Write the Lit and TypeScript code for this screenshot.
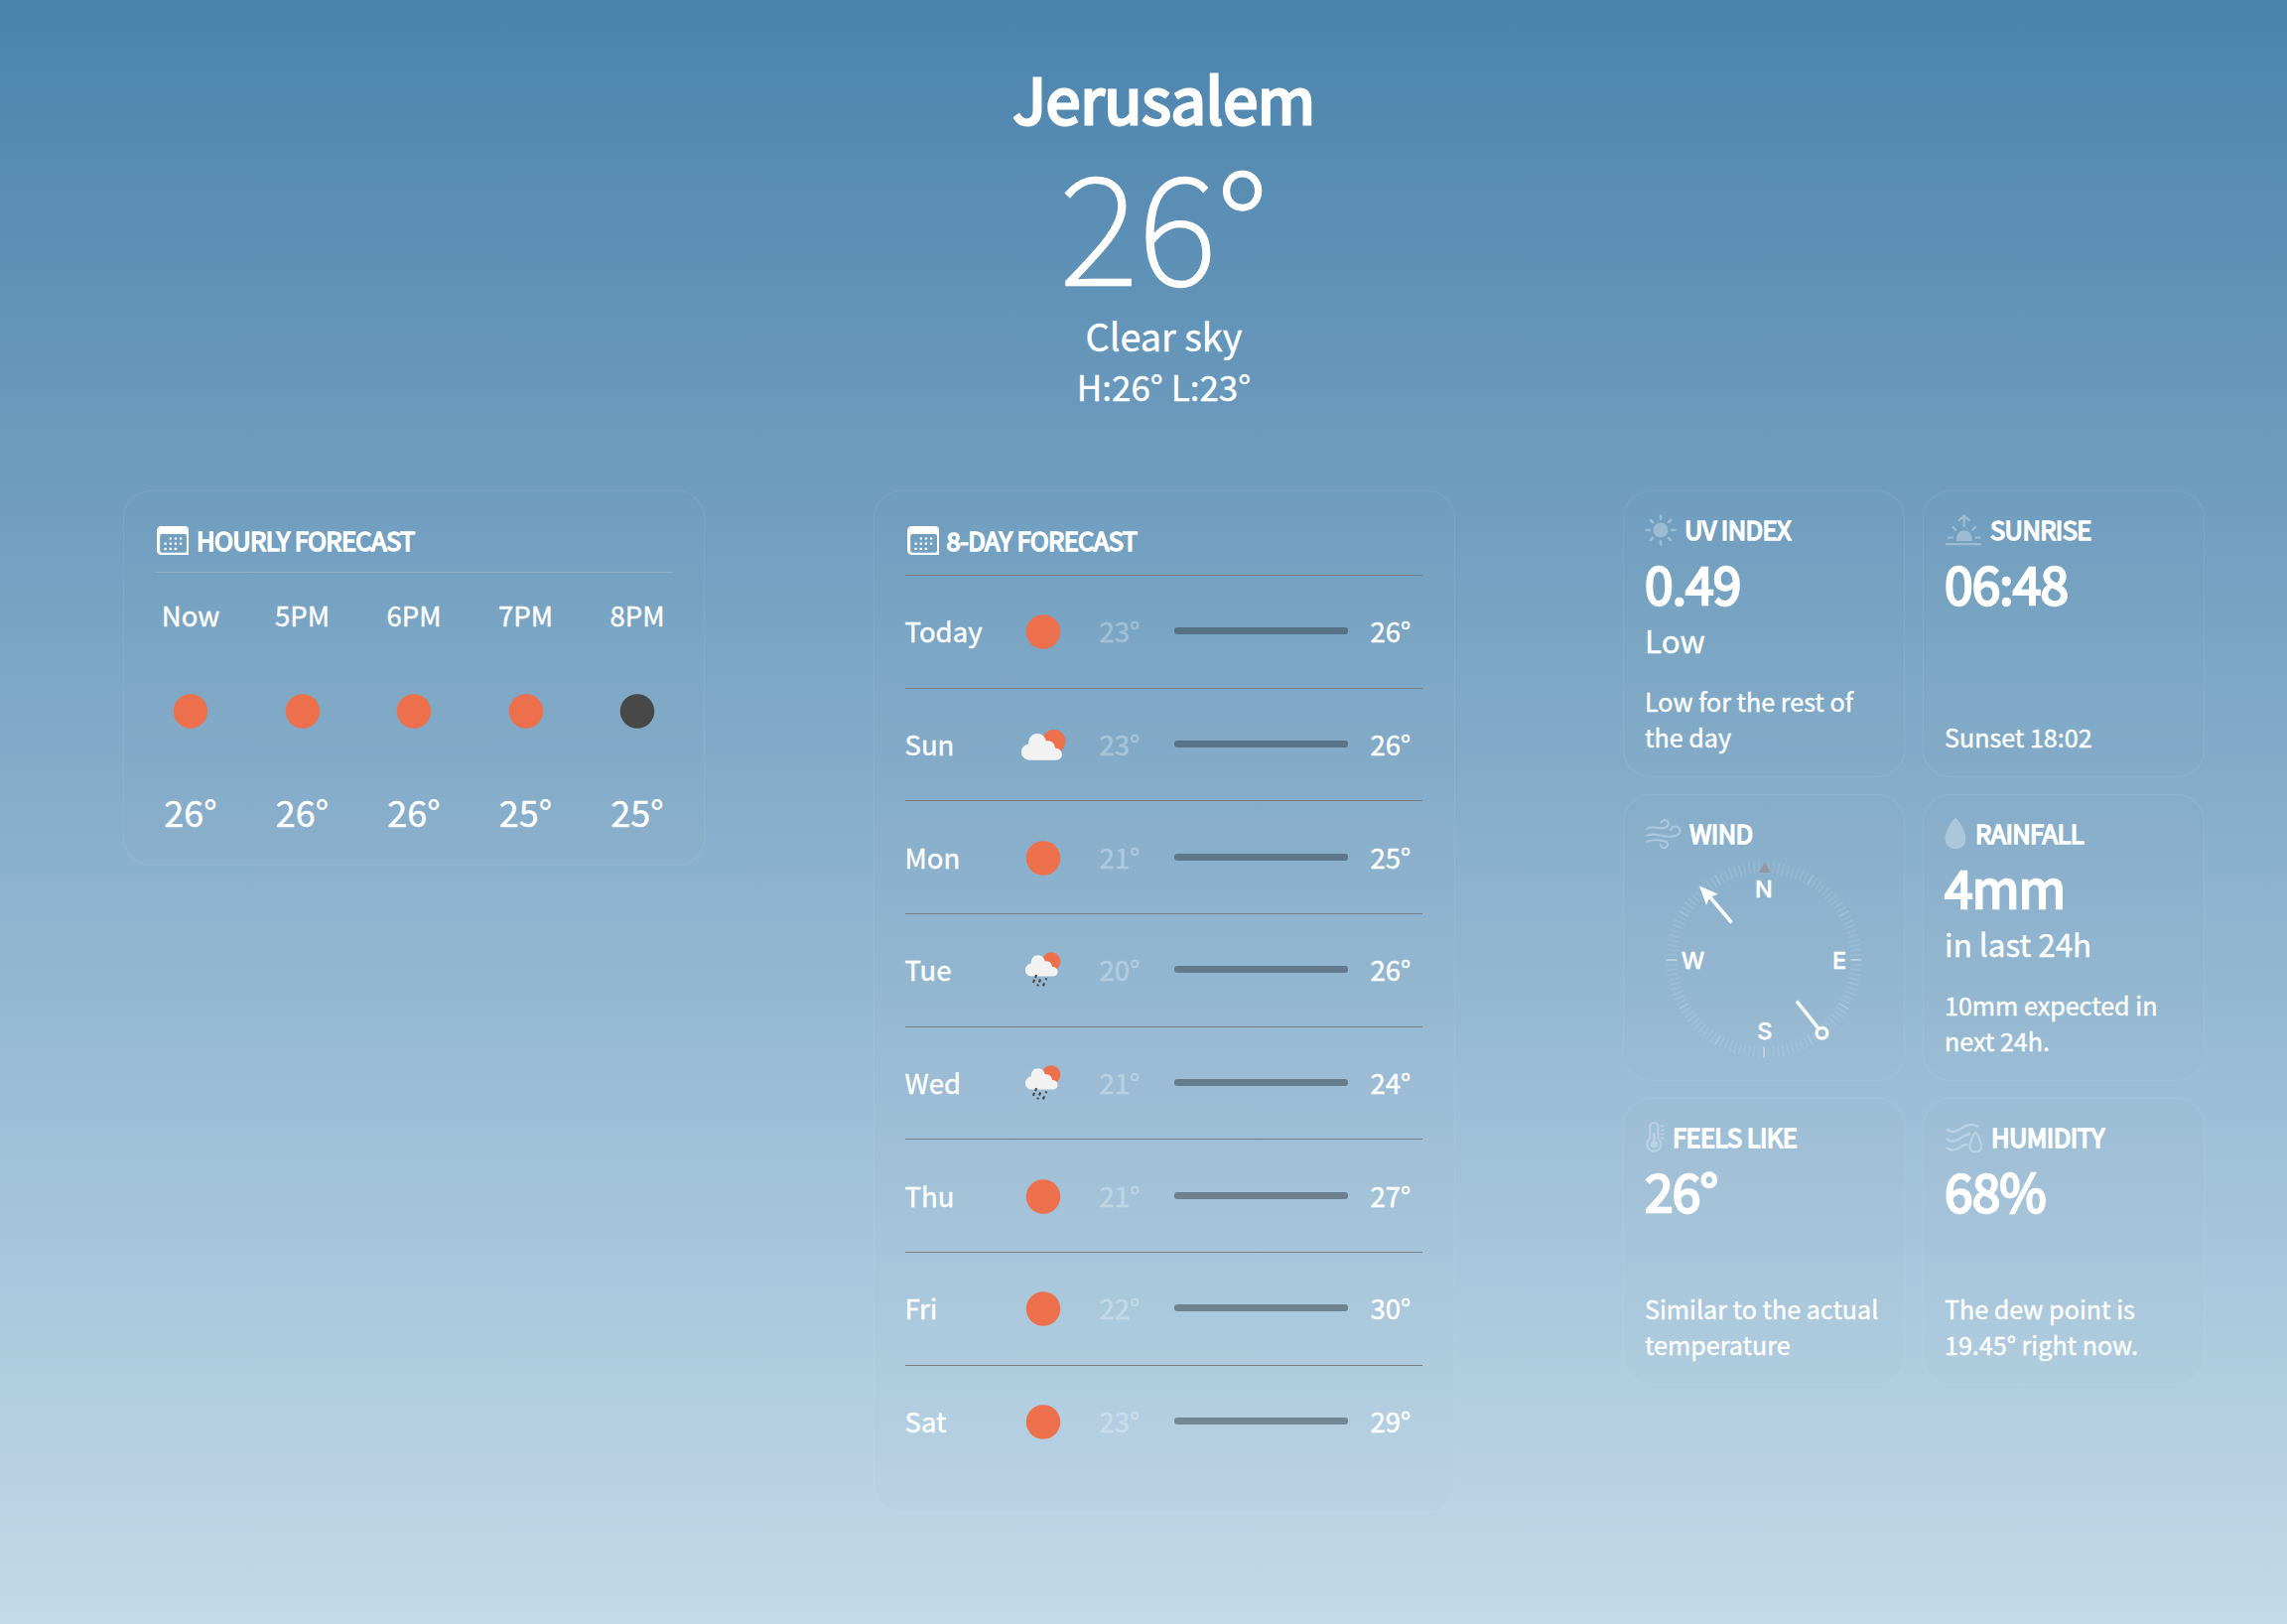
import { LitElement, html, css, svg } from "lit";
import { customElement, property } from "lit/decorators.js";

const cloud = svg`<g>
  <circle cx="38.7" cy="24.9" r="11.8" fill="#ed704d"/>
  <path d="M13.3 43.7a8.2 8.2 0 0 1-.2-16.3c-.1-6 3.600-10.400 8.800-10.400 5 0 8.300 3.300 8.800 7.500 4.300-.9 8.300 1.300 9 5.800l.3 1.500a6.200 6.200 0 0 1 7 5.900c0 3.500-2.700 6-6.200 6z" fill="#f2f2f2"/></g>`;

const drops: [number, number, number][] = [
  [20.6, 34.6, 1.4], [18.5, 39.4, 1.5], [24.5, 39, 1.5], [30.9, 37.2, 0.8], [22.6, 43.5, 0.9], [28.5, 42.8, 1.5],
];

const sky: Record<string, unknown> = {
  clear: svg`<circle cx="28" cy="28.500" r="17.300" fill="#ed704d"/>`,
  night: svg`<circle cx="28" cy="28.500" r="17.300" fill="#484848"/>`,
  cloudy: cloud,
  rain: svg`<g transform="translate(5.2 -.2) scale(.796)">${cloud}</g>
    ${drops.map(([x, y, h]) => svg`<line x1=${x + h * 0.4} y1=${y - h} x2=${x - h * 0.4} y2=${y + h} stroke="#484848" stroke-width="2.2"/>`)}`,
};

@customElement("sky-icon")
class SkyIcon extends LitElement {
  @property() kind = "clear";
  static styles = css`
    :host { display: block; width: 56px; height: 56px; }
    svg { display: block; }
  `;
  render() {
    return html`<svg width="56" height="56" viewBox="0 0 56 56">${sky[this.kind]}</svg>`;
  }
}

const icons: Record<string, unknown> = {
  calendar: html`<svg width="32" height="29" viewBox="0 0 32 29">
    <path fill="#fff" fill-rule="evenodd" d="M4.500 0H28a4 4 0 0 1 4 4V29H4.500A4.500 4.500 0 0 1 0 24.500V4.500A4.500 4.500 0 0 1 4.500 0zM5.200 8A2 2 0 0 0 3.200 10V24.500A2.200 2.200 0 0 0 5.400 26.700H28a2 2 0 0 0 2-2V10a2 2 0 0 0-2-2z"/>
    ${[[13.8, 12.5], [18.9, 12.5], [24.1, 12.5], [8.6, 17.700], [13.8, 17.700], [18.9, 17.700], [24.1, 17.700], [8.6, 22.9], [13.8, 22.9], [18.9, 22.9]].map(
      ([x, y]) => svg`<rect x=${x - 1.2} y=${y - 1.1} width="2.4" height="2.2" rx=".5" fill="#fff"/>`
    )}</svg>`,
  uv: html`<svg width="32" height="32" viewBox="0 0 32 32"><g fill="none" stroke="#fff" stroke-width="2.6" stroke-linecap="round">
    <circle cx="16" cy="16" r="7.5" fill="#fff" stroke="none"/>
    ${[0, 45, 90, 135, 180, 225, 270, 315].map((a) => svg`<path d="M16 1.600v3.100" transform="rotate(${a} 16 16)"/>`)}</g></svg>`,
  sunrise: html`<svg width="38" height="33" viewBox="0 0 38 33"><g fill="none" stroke="#fff" stroke-width="2.300" stroke-linecap="round" stroke-linejoin="round">
    <path d="M1 31.200H37" stroke-linecap="butt"/><path d="M12 28v-3a7.800 7.800 0 0 1 15.600 0v3z" fill="#fff" stroke="none"/>
    <path d="M4 24.700h4M31.500 24.700h4M8.500 14.200l2.600 2.400M31 14.200l-2.600 2.400M19.700 13V2.500M14.700 7.200l5-4.800 5 4.800"/></g></svg>`,
  wind: html`<svg width="37" height="30" viewBox="0 0 37 30"><g fill="none" stroke="#fff" stroke-width="2.200" stroke-linecap="round">
    <path d="M2.300 10C5 8 9 8 13 8.800c6 1.200 11-.3 11-4.300A3.900 3.900 0 0 0 16.600 3.300"/>
    <path d="M2.300 16.600c5-2.300 9-1 15 .3 8 1.700 18.200 1.200 18.200-5.100A4.700 4.700 0 0 0 26.200 11.300"/>
    <path d="M2.300 22.800c5-2.400 9-1.600 13.700-1.200 4.500.4 7 1 7 3.700a3.500 3.500 0 0 1-7 .7"/></g></svg>`,
  drop: html`<svg width="23" height="31" viewBox="0 0 23 31"><path fill="#fff" d="M11 0C12.400 0 21.300 12 21.300 20.200S16.500 31 11 31 .7 28.400.7 20.200 9.600 0 11 0z"/></svg>`,
  thermometer: html`<svg width="20" height="31" viewBox="0 0 20 31"><g fill="none" stroke="#fff" stroke-width="2" stroke-linecap="round">
    <path d="M5.300 17V5a4 4 0 0 1 8 0v12a7 7 0 1 1-8 0z"/><circle cx="9.300" cy="22.700" r="3.800" fill="#fff" stroke="none"/><path d="M9.300 21V12" stroke-width="3"/>
    <path d="M16.500 4.500h2.500M16.500 8.500h2.500M16.500 12.500h2.500M16.500 16.500h2.500" stroke-width="1.500"/></g></svg>`,
  humidity: html`<svg width="39" height="33" viewBox="0 0 39 33"><g fill="none" stroke="#fff" stroke-width="2.400" stroke-linecap="round" stroke-linejoin="round">
    <path d="M2.600 9c3.500 3 7 3 12 0S25.500 1.500 33.600 5.500"/><path d="M2.600 18.500c3.500 3.200 7 3 12 0 4-2.400 6.500-5 11-5.300"/><path d="M2.600 27.700c3 2.500 6.500 2.600 11 .3 3.500-1.800 5-3.700 8.600-4.200"/>
    <path stroke-width="2.100" d="M31.200 11.500C29 14 25.500 20.500 25.500 25.500s2.500 6 5.700 6 5.700-1 5.700-6S33.400 14 31.200 11.500z"/></g></svg>`,
};

const hours = [
  { label: "Now", kind: "clear", temp: 26 },
  { label: "5PM", kind: "clear", temp: 26 },
  { label: "6PM", kind: "clear", temp: 26 },
  { label: "7PM", kind: "clear", temp: 25 },
  { label: "8PM", kind: "night", temp: 25 },
];

const days = [
  { label: "Today", kind: "clear", low: 23, high: 26 },
  { label: "Sun", kind: "cloudy", low: 23, high: 26 },
  { label: "Mon", kind: "clear", low: 21, high: 25 },
  { label: "Tue", kind: "rain", low: 20, high: 26 },
  { label: "Wed", kind: "rain", low: 21, high: 24 },
  { label: "Thu", kind: "clear", low: 21, high: 27 },
  { label: "Fri", kind: "clear", low: 22, high: 30 },
  { label: "Sat", kind: "clear", low: 23, high: 29 },
];

const tiles = [
  { icon: "uv", title: "UV INDEX", value: "0.49", sub: "Low", note: "Low for the rest of the day" },
  { icon: "sunrise", title: "SUNRISE", value: "06:48", sub: "", note: "Sunset 18:02" },
  { icon: "wind", title: "WIND", compass: true },
  { icon: "drop", title: "RAINFALL", value: "4mm", sub: "in last 24h", note: "10mm expected in next 24h." },
  { icon: "thermometer", title: "FEELS LIKE", value: "26°", sub: "", note: "Similar to the actual temperature" },
  { icon: "humidity", title: "HUMIDITY", value: "68%", sub: "", note: "The dew point is 19.45° right now." },
];

@customElement("wind-compass")
class WindCompass extends LitElement {
  static styles = css`
    :host { display: block; width: 200px; height: 200px; }
    svg { display: block; overflow: visible; }
    .letter { font: 500 23.500px Inter, sans-serif; fill: #fff; stroke: #fff; stroke-width: 0.400px; text-anchor: middle; }
    .tick { stroke: #fff; stroke-width: 1.300; opacity: 0.12; }
    .tick-major { opacity: 0.24; }
    .tick-cardinal { stroke-width: 1; opacity: 0.7; }
  `;
  render() {
    const ticks = Array.from({ length: 119 }, (_, i) => i + 1);
    return html`<svg width="200" height="200" viewBox="-100 -100 200 200">
      ${ticks.map((i) => {
        const kind = i % 30 === 0 ? "tick tick-cardinal" : i % 10 === 0 ? "tick tick-major" : "tick";
        return svg`<line class=${kind} y1="-98.500" y2="-87.500" transform="rotate(${i * 3})"/>`;
      })}
      <path d="M0.800 -98.500L6.800 -88H-5.200z" fill="#9497a2"/>
      <text class="letter" x="0" y="-63.500">N</text>
      <text class="letter" x="76" y="8.500">E</text>
      <text class="letter" x="0.800" y="79.500">S</text>
      <text class="letter" x="-71.500" y="8.500">W</text>
      <path d="M-32.500 -37.500L-56.500 -66M33 41.500L54.500 68.500" stroke="#fff" stroke-width="3.500" fill="none"/>
      <path d="M-65 -74.500L-46 -66.300L-54.500 -63.300L-58 -55z" fill="#fff"/>
      <circle cx="58.500" cy="73.700" r="5.400" fill="none" stroke="#fff" stroke-width="3.300"/>
    </svg>`;
  }
}

@customElement("app-root")
class AppRoot extends LitElement {
  static styles = css`
    :host {
      display: block;
      box-sizing: border-box;
      height: 1636px;
      padding: 59px 83px 0 124px;
      background: linear-gradient(#4b83ad, #c3dae9);
      color: #fff;
      font-family: "Noto Sans CJK JP", "Noto Sans", sans-serif;
      -webkit-text-stroke: 0.400px #fff;
    }
    .hero { display: flex; flex-direction: column; align-items: center; height: 435px; white-space: nowrap; }
    .city { font-size: 63px; line-height: 80px; letter-spacing: -0.300px; margin-top: -1px; -webkit-text-stroke-width: 2.900px; }
    .now { font-size: 151px; line-height: 150px; font-weight: 100; letter-spacing: 0.700px; margin-top: 8px; -webkit-text-stroke-width: 2.400px; }
    .condition { font-size: 37.800px; line-height: 50px; margin-top: 17px; }
    .range { font-size: 35px; line-height: 50px; margin-top: 1px; }
    .columns { display: grid; grid-template-columns: repeat(3, 586px); justify-content: space-between; align-items: start; }
    .card {
      box-sizing: border-box;
      border: 1px solid rgba(255, 255, 255, 0.07);
      border-radius: 28px;
      background: rgba(128, 150, 190, 0.012);
    }
    .wide { padding: 35px 32px 0 31px; }
    .head { display: flex; align-items: center; font-size: 25.500px; white-space: nowrap; -webkit-text-stroke-width: 1.500px; letter-spacing: -0.600px; }
    .head svg { flex: none; }
    .head span { margin-top: -3px; }
    .wide .head { height: 29px; gap: 8px; padding-left: 2px; }
    .hourly { height: 378px; }
    .hours { display: flex; justify-content: space-between; margin: 17px 0 0 1px; border-top: 1px solid rgba(255, 255, 255, 0.2); padding: 25px 0 0; }
    .hour { display: flex; flex-direction: column; align-items: center; width: 70px; }
    .hour-label { font-size: 27.500px; line-height: 34px; }
    .hour-icon { margin: 52px 0 48px; }
    .hour-temp { font-size: 36px; line-height: 50px; }
    .daily { height: 1030px; }
    .days { margin-top: 20px; }
    .day {
      display: grid;
      grid-template-columns: 111.300px 56px 28.700px 76px 175px 1fr;
      align-items: center;
      box-sizing: border-box;
      height: 113.700px;
      border-top: 1px solid #787d84;
      font-size: 27.500px;
      line-height: 36px;
    }
    .day span:not(.bar) { margin-top: -2px; }
    .low { grid-column: 4; opacity: 0.3; }
    .bar { height: 7px; border-radius: 3px; background: rgba(50, 62, 72, 0.5); margin-top: -1px; }
    .high { padding-left: 22px; }
    .tiles { display: grid; grid-template-columns: 284px 284px; gap: 17.500px 18px; }
    .tile { display: flex; flex-direction: column; height: 288.500px; padding: 23px 20px 22px 21px; }
    .tile .head { height: 31px; gap: 8px; }
    .tile .head svg { opacity: 0.3; }
    .value { font-size: 51.500px; line-height: 64px; letter-spacing: -0.900px; -webkit-text-stroke-width: 2.400px; margin-top: 6px; }
    .sub { font-size: 31.400px; line-height: 40px; margin-top: 6px; }
    .note { font-size: 25.100px; line-height: 36px; margin-top: auto; }
    .compass { margin: 12px auto 0 20px; -webkit-text-stroke-width: 0; }
  `;

  render() {
    return html`
      <header class="hero">
        <div class="city">Jerusalem</div>
        <div class="now">26°</div>
        <div class="condition">Clear sky</div>
        <div class="range">H:26° L:23°</div>
      </header>
      <main class="columns">
        <section class="card wide hourly">
          <div class="head">${icons.calendar}<span>HOURLY FORECAST</span></div>
          <div class="hours">
            ${hours.map((h) => html`<div class="hour">
              <span class="hour-label">${h.label}</span>
              <sky-icon class="hour-icon" kind=${h.kind}></sky-icon>
              <span class="hour-temp">${h.temp}°</span>
            </div>`)}
          </div>
        </section>
        <section class="card wide daily">
          <div class="head">${icons.calendar}<span>8-DAY FORECAST</span></div>
          <div class="days">
            ${days.map((d) => html`<div class="day">
              <span>${d.label}</span><sky-icon kind=${d.kind}></sky-icon>
              <span class="low">${d.low}°</span><span class="bar"></span><span class="high">${d.high}°</span>
            </div>`)}
          </div>
        </section>
        <section class="tiles">
          ${tiles.map((t) => html`<article class="card tile">
            <div class="head">${icons[t.icon]}<span>${t.title}</span></div>
            ${t.compass
              ? html`<wind-compass class="compass"></wind-compass>`
              : html`<div class="value">${t.value}</div><div class="sub">${t.sub}</div><div class="note">${t.note}</div>`}
          </article>`)}
        </section>
      </main>
    `;
  }
}
